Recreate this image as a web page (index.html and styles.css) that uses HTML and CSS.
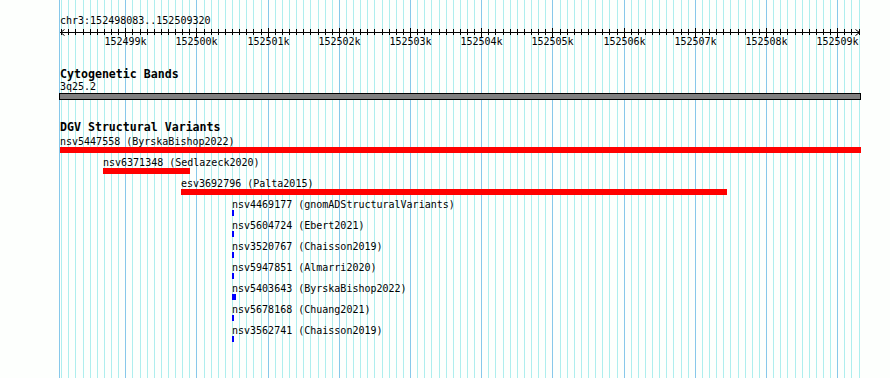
FILE: index.html
```html
<!DOCTYPE html>
<html lang="en">
<head>
    <meta charset="UTF-8">
    <title>chr3:152498083..152509320</title>
    <link rel="stylesheet" href="styles.css">
</head>
<body>
<div class="panel">
    <svg class="grid" id="grid" width="890" height="378"></svg>
    <div class="tracks">
        <div class="ruler-title">chr3:152498083..152509320</div>
        <svg class="ruler" id="ruler" width="890" height="20"></svg>

        <section class="track track-bands">
            <h2 class="track-name">Cytogenetic Bands</h2>
            <div class="band-label">3q25.2</div>
            <div class="band"></div>
        </section>

        <section class="track track-dgv">
            <h2 class="track-name">DGV Structural Variants</h2>
            <div class="feature loss" data-start="152484920" data-end="152516743">
                <span class="feature-label">nsv5447558 (ByrskaBishop2022)</span>
                <div class="feature-bar"></div>
            </div>
            <div class="feature loss" data-start="152498687" data-end="152499895">
                <span class="feature-label">nsv6371348 (Sedlazeck2020)</span>
                <div class="feature-bar"></div>
            </div>
            <div class="feature loss" data-start="152499783" data-end="152507438">
                <span class="feature-label">esv3692796 (Palta2015)</span>
                <div class="feature-bar"></div>
            </div>
            <div class="feature gain" data-start="152500499" data-end="152500513">
                <span class="feature-label">nsv4469177 (gnomADStructuralVariants)</span>
                <div class="feature-bar"></div>
            </div>
            <div class="feature gain" data-start="152500499" data-end="152500513">
                <span class="feature-label">nsv5604724 (Ebert2021)</span>
                <div class="feature-bar"></div>
            </div>
            <div class="feature gain" data-start="152500499" data-end="152500513">
                <span class="feature-label">nsv3520767 (Chaisson2019)</span>
                <div class="feature-bar"></div>
            </div>
            <div class="feature gain" data-start="152500499" data-end="152500513">
                <span class="feature-label">nsv5947851 (Almarri2020)</span>
                <div class="feature-bar"></div>
            </div>
            <div class="feature gain" data-start="152500499" data-end="152500541">
                <span class="feature-label">nsv5403643 (ByrskaBishop2022)</span>
                <div class="feature-bar"></div>
            </div>
            <div class="feature gain" data-start="152500499" data-end="152500513">
                <span class="feature-label">nsv5678168 (Chuang2021)</span>
                <div class="feature-bar"></div>
            </div>
            <div class="feature gain" data-start="152500499" data-end="152500513">
                <span class="feature-label">nsv3562741 (Chaisson2019)</span>
                <div class="feature-bar"></div>
            </div>
        </section>
    </div>
</div>

<script>
    const START = 152498083;
    const END = 152509320;
    const LEFT = 60;
    const WIDTH = 800;
    const scale = WIDTH / (END - START);
    const xOf = pos => LEFT + (pos - START) * scale;
    const NS = 'http://www.w3.org/2000/svg';

    function svgEl(parent, name, attrs) {
        const el = document.createElementNS(NS, name);
        for (const key in attrs) el.setAttribute(key, attrs[key]);
        parent.appendChild(el);
        return el;
    }

    // 背景网格：每 100bp 一条细线，每 1kb 一条深色线
    const grid = document.getElementById('grid');
    svgEl(grid, 'line', { x1: 59.5, y1: 0, x2: 59.5, y2: 378, class: 'major' });
    for (let pos = Math.ceil(START / 100) * 100; pos <= END; pos += 100) {
        const x = Math.round(xOf(pos)) + 0.5;
        svgEl(grid, 'line', { x1: x, y1: 0, x2: x, y2: 378, class: pos % 1000 === 0 ? 'major' : 'minor' });
    }

    // 标尺
    const ruler = document.getElementById('ruler');
    const y = 5.5;
    svgEl(ruler, 'line', { x1: LEFT, y1: y, x2: LEFT + WIDTH, y2: y });
    svgEl(ruler, 'polyline', { points: `64.5,2.5 60.5,${y} 64.5,8.5` });
    svgEl(ruler, 'polyline', { points: `855.5,2.5 859.5,${y} 855.5,8.5` });
    for (let pos = Math.ceil(START / 100) * 100; pos <= END; pos += 100) {
        const x = Math.round(xOf(pos)) + 0.5;
        const major = pos % 1000 === 0;
        svgEl(ruler, 'line', { x1: x, y1: major ? 1 : 2, x2: x, y2: major ? 10 : 8 });
        if (major) {
            const label = svgEl(ruler, 'text', { x: x, y: 17.5 });
            label.textContent = (pos / 1000) + 'k';
        }
    }

    // 特征条
    document.querySelectorAll('.feature').forEach(feature => {
        const start = Math.max(+feature.dataset.start, START);
        const end = Math.min(+feature.dataset.end, END);
        const left = Math.round(xOf(start));
        const right = Math.round(xOf(end)) + 1;
        feature.style.marginLeft = left + 'px';
        feature.querySelector('.feature-bar').style.width = Math.max(right - left, 1) + 'px';
    });
</script>
</body>
</html>
```

FILE: styles.css
```css
* {
    box-sizing: border-box;
    margin: 0;
    padding: 0;
}

body {
    background-color: #fdfffd;
    font-family: 'DejaVu Sans Mono', 'Liberation Mono', monospace;
    font-size: 10px;
    color: #000;
}

.panel {
    position: relative;
    width: 890px;
    height: 378px;
    overflow: hidden;
}

.grid {
    position: absolute;
    top: 0;
    left: 0;
}

.grid line {
    stroke-width: 1;
}

.grid .minor {
    stroke: #aeeeee;
}

.grid .major {
    stroke: #87c8ea;
}

.tracks {
    position: relative;
}

.ruler-title {
    margin: 15px 0 0 60px;
    line-height: 12px;
    white-space: nowrap;
}

.ruler {
    display: block;
}

.ruler line,
.ruler polyline {
    stroke: #000;
    stroke-width: 1;
    fill: none;
}

.ruler text {
    font-family: 'DejaVu Sans Mono', 'Liberation Mono', monospace;
    font-size: 10px;
    text-anchor: middle;
    fill: #000;
}

.track-name {
    margin: 21px 0 0 60px;
    font-size: 11.6px;
    font-weight: bold;
    line-height: 13px;
    white-space: nowrap;
}

.band-label {
    margin-left: 60px;
    line-height: 12px;
}

.band {
    margin-left: 59px;
    width: 802px;
    height: 7px;
    background-color: #808080;
    border: 1px solid #000;
}

.track-dgv .track-name {
    margin-bottom: 2px;
}

.feature {
    height: 21px;
}

.feature-label {
    display: block;
    line-height: 11px;
    white-space: nowrap;
}

.feature-bar {
    height: 6px;
}

.loss .feature-bar {
    background-color: #ff0000;
}

.gain .feature-bar {
    background-color: #0000ff;
}
```
